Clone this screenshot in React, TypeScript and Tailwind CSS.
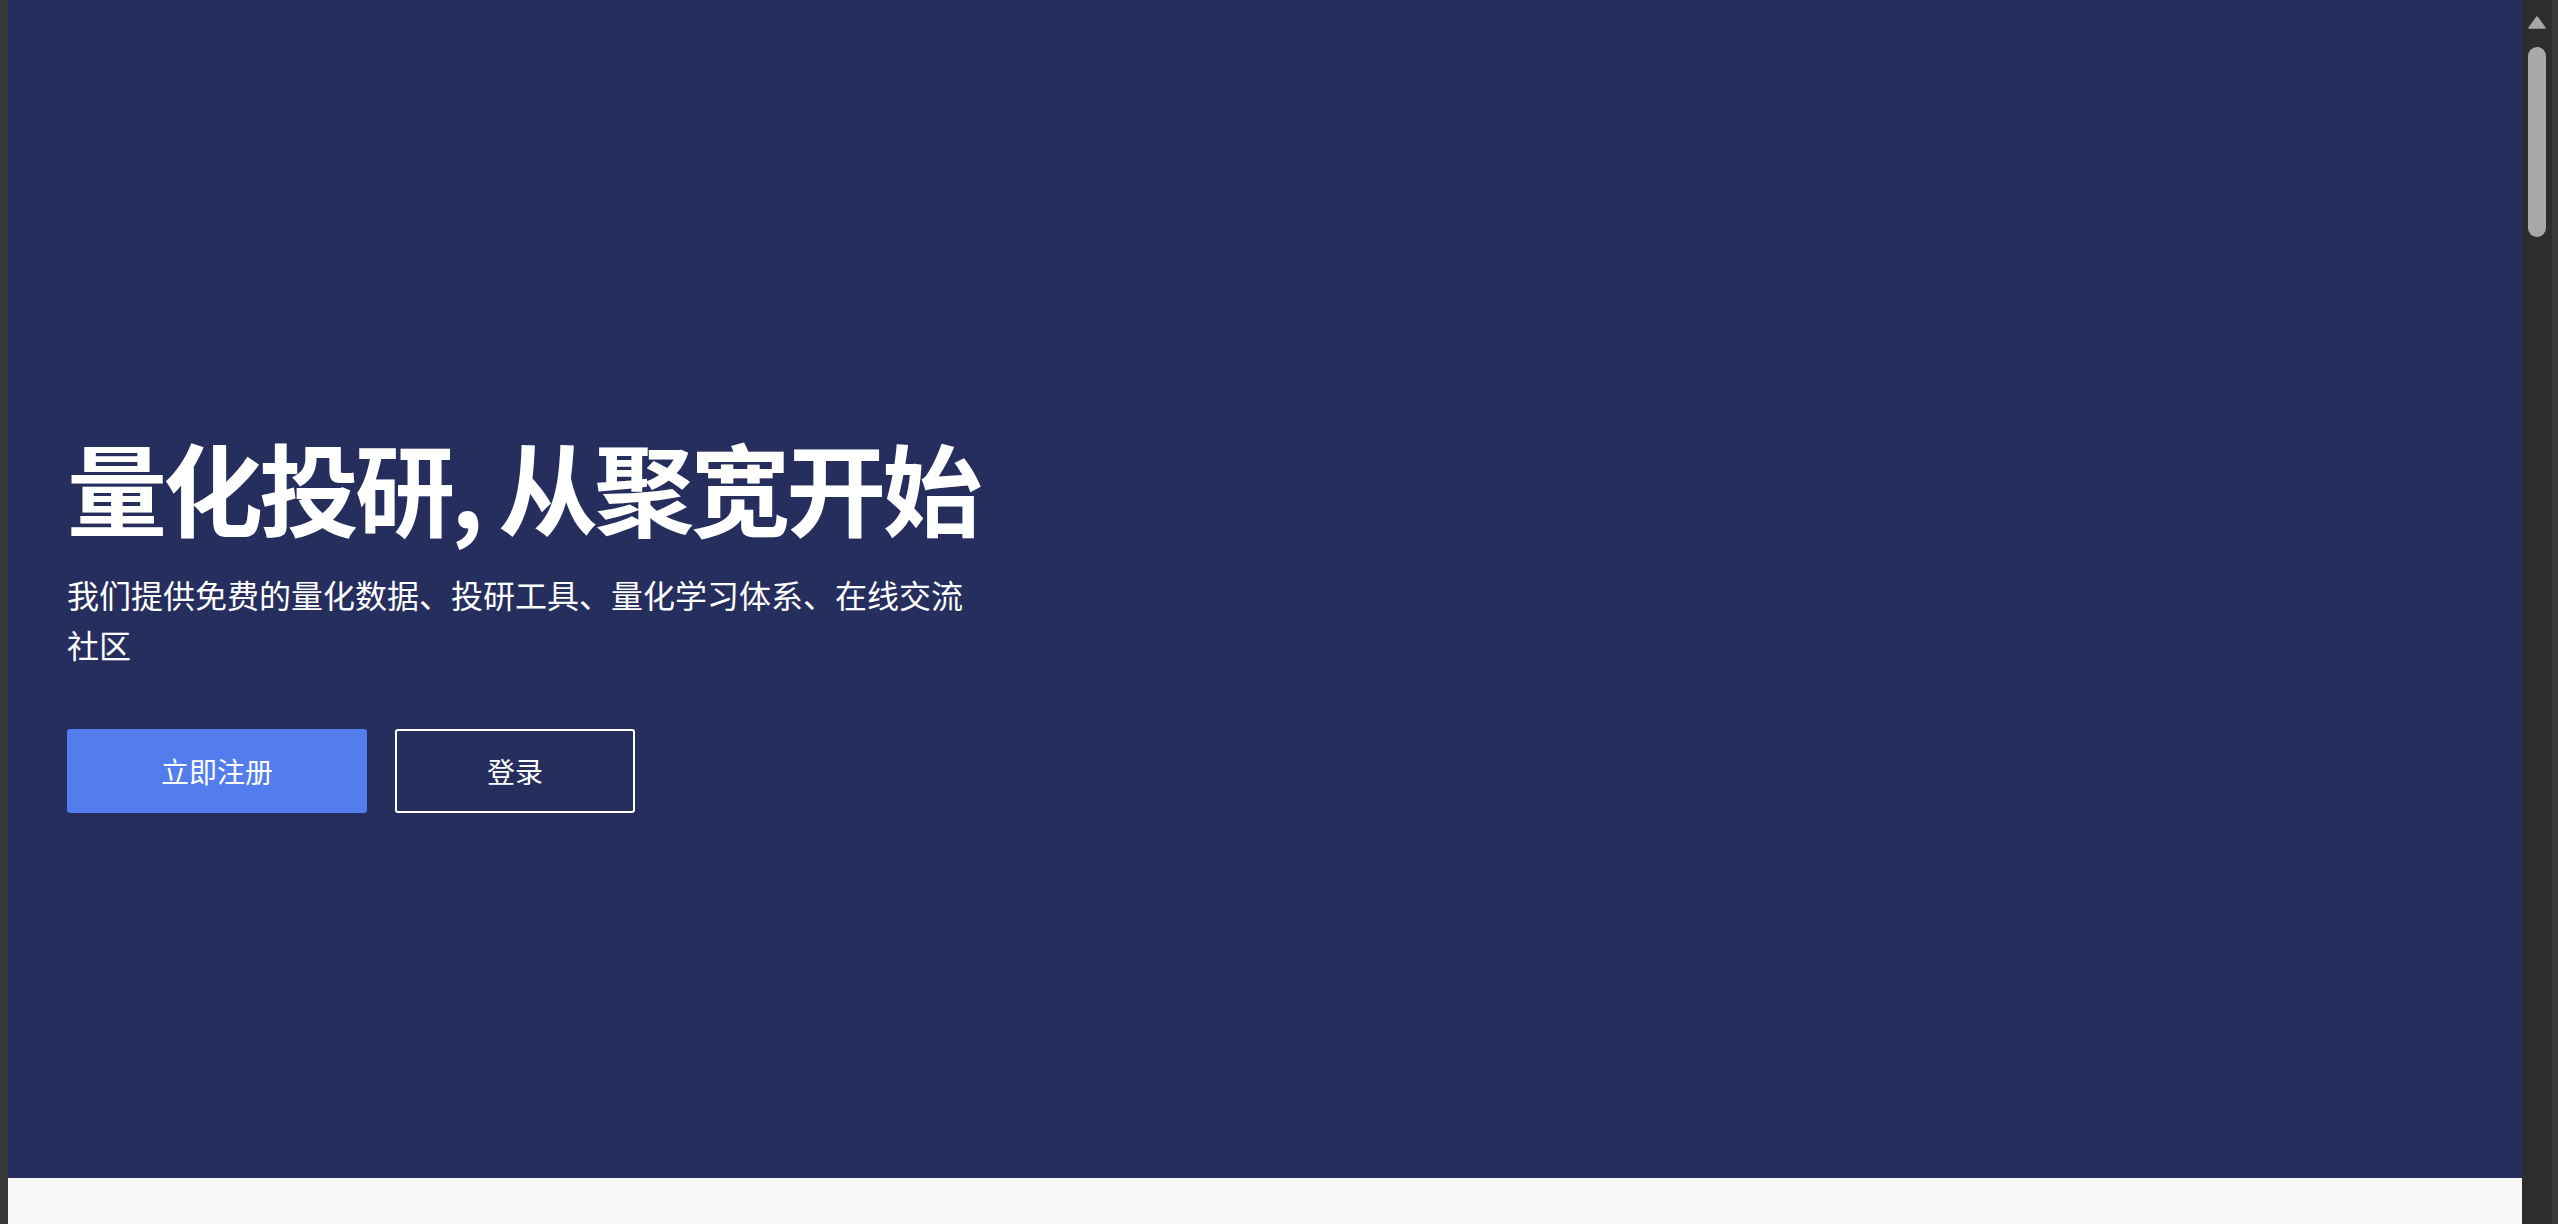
export default function App() {
  return (
    <div
      className="flex h-[1224px] w-full overflow-hidden bg-[#383838]"
      style={{ fontFamily: '"Noto Sans CJK SC", "Noto Sans", sans-serif' }}
    >
      {/* page */}
      <div className="ml-[8px] flex min-w-0 flex-1 flex-col bg-[#f7f7f7]">
        <section className="h-[1178px] bg-[#262e5e] pl-[59px] pt-[428px] text-white">
          <h1 className="text-[100px] font-bold leading-[115px] tracking-[-4px]">
            量化投研, 从聚宽开始
          </h1>
          <p className="mt-[26px] max-w-[905px] text-[32px] leading-[50px]">
            我们提供免费的量化数据、投研工具、量化学习体系、在线交流社区
          </p>
          <div className="mt-[60px] flex gap-[28px]">
            <button
              type="button"
              className="h-[84px] w-[300px] rounded-[3px] bg-[#537dec] text-[28px] text-white"
            >
              立即注册
            </button>
            <button
              type="button"
              className="h-[84px] w-[240px] rounded-[3px] border-2 border-white text-[28px] text-white"
            >
              登录
            </button>
          </div>
        </section>
      </div>

      {/* scrollbar */}
      <div className="flex w-[30px] shrink-0 flex-col items-center bg-[#2d2d2d] pt-[16px]">
        <svg width="18" height="13" viewBox="0 0 18 13">
          <path d="M9 1 L17 12 L1 12 Z" fill="#a8a8a8" strokeLinejoin="round" stroke="#a8a8a8" strokeWidth="1.5" />
        </svg>
        <div className="mt-[18px] h-[190px] w-[18px] rounded-full bg-[#a8a8a8]" />
      </div>
      <div className="w-[6px] shrink-0 bg-[#3a3a3a]" />
    </div>
  );
}
